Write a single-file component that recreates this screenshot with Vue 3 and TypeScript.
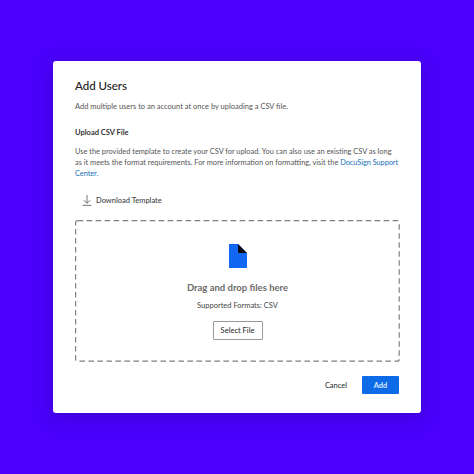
<script setup lang="ts">
const title = 'Add Users'
</script>

<template>
  <main class="page">
    <section class="card">
      <h1>{{ title }}</h1>
      <p class="intro">Add multiple users to an account at once by uploading a CSV file.</p>
      <h2>Upload CSV File</h2>
      <p class="desc">Use the provided template to create your CSV for upload. You can also use an existing CSV as long as it meets the format requirements. For more information on formatting, visit the <a>DocuSign Support Center.</a></p>
      <div class="download">
        <svg width="10" height="11" viewBox="0 0 10 11" fill="none" stroke="#666" stroke-width="0.9">
          <path d="M5 0V8.2M1.9 5.2L5 8.3L8.1 5.2M0.6 10.4H9.4" />
        </svg>
        <span>Download Template</span>
      </div>
      <div class="drop">
        <svg class="dash" width="325" height="142" viewBox="0 0 325 142" fill="none">
          <rect x="0.6" y="0.6" width="323.6" height="140.6" rx="2" stroke="#808080" stroke-width="1.2" stroke-dasharray="5.6 3.4" />
        </svg>
        <svg class="file" width="18" height="24" viewBox="0 0 18 24">
          <path d="M0 0H9L18 9V24H0Z" fill="#1166f2" />
          <path d="M9 0L18 9H9Z" fill="#0b0b14" />
        </svg>
        <div class="drag">Drag and drop files here</div>
        <div class="formats">Supported Formats: CSV</div>
        <button class="select">Select File</button>
      </div>
      <footer>
        <button class="cancel">Cancel</button>
        <button class="add">Add</button>
      </footer>
    </section>
  </main>
</template>

<style scoped>
.page {
  width: 474px;
  height: 474px;
  box-sizing: border-box;
  padding: 61px 53px;
  background: #4a00fb;
  font-family: Lato, "Open Sans", sans-serif;
}
.card {
  width: 368px;
  height: 352px;
  box-sizing: border-box;
  padding: 18px 22px 0;
  background: #fff;
  border-radius: 3px;
  box-shadow: 0 4px 18px rgba(40, 0, 140, 0.35);
}
h1 {
  margin: 0;
  font-size: 11.5px;
  line-height: 14px;
  font-weight: 500;
  color: #222;
}
.intro {
  margin: 8px 0 0;
  font-size: 7.5px;
  line-height: 12px;
  color: #555;
}
h2 {
  margin: 14px 0 0;
  font-size: 7.5px;
  line-height: 12px;
  font-weight: 700;
  color: #333;
}
.desc {
  margin: 7px 0 0;
  font-size: 7.4px;
  line-height: 11px;
  color: #555;
}
.desc a {
  color: #1a73b8;
  letter-spacing: -0.06px;
}
.download {
  display: flex;
  align-items: center;
  gap: 4px;
  margin: 15px 0 0 7px;
  height: 12px;
  font-size: 7.5px;
  font-weight: 500;
  color: #444;
}
.drop {
  position: relative;
  width: 325px;
  height: 142px;
  margin-top: 14px;
  display: flex;
  flex-direction: column;
  align-items: center;
  padding-top: 24px;
  box-sizing: border-box;
}
.dash {
  position: absolute;
  left: 0;
  top: 0;
}
.drag {
  margin-top: 14px;
  font-size: 9.5px;
  line-height: 12px;
  font-weight: 700;
  color: #6c6c6c;
}
.formats {
  margin-top: 6px;
  font-size: 7.5px;
  line-height: 12px;
  color: #444;
}
.select {
  margin-top: 9px;
  width: 50px;
  height: 19px;
  padding: 0;
  background: #fff;
  border: 1px solid #999;
  border-radius: 1px;
  font: 500 7.5px Lato, sans-serif;
  color: #333;
}
footer {
  display: flex;
  justify-content: flex-end;
  align-items: center;
  gap: 14px;
  margin-top: 14px;
  width: 324px;
}
.cancel {
  padding: 0;
  width: 24px;
  background: none;
  border: 0;
  font: 500 7.5px Lato, sans-serif;
  color: #333;
}
.add {
  width: 37px;
  height: 18px;
  padding: 0;
  background: #0e6be8;
  border: 0;
  border-radius: 1px;
  font: 700 7.5px Lato, sans-serif;
  color: #dbe8ff;
}
</style>
